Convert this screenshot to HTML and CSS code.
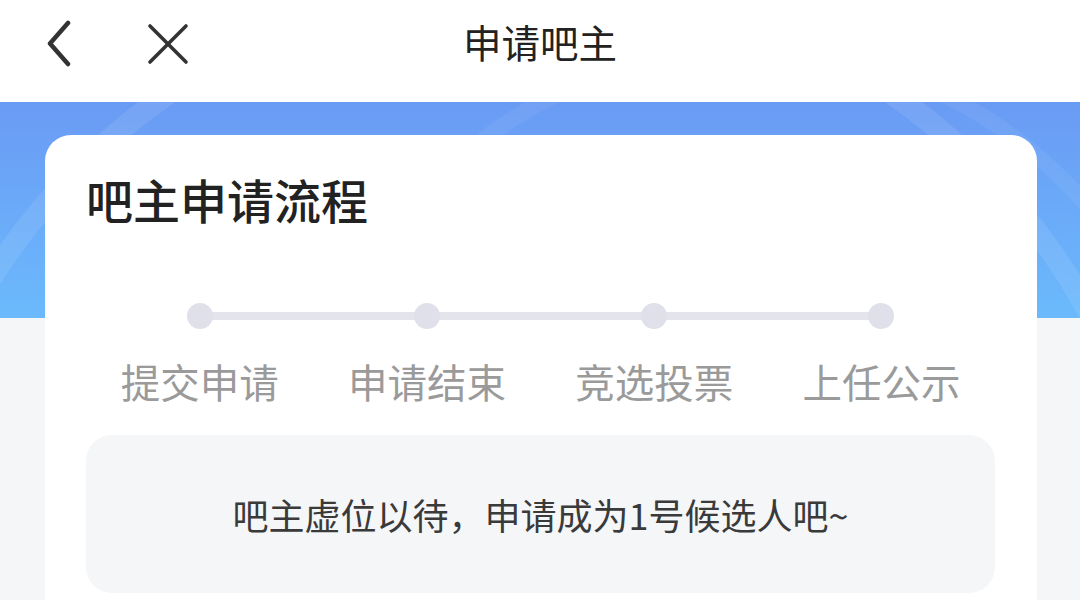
FILE: index.html
```html
<!DOCTYPE html>
<html>
  <head>
    <meta charset="utf-8">
    <title>申请吧主</title>
    <link rel="stylesheet" href="styles.css">
  </head>

  <body>
    <div class="top-bar">
      <div class="nav-left">
        <svg class="nav-icon" viewBox="0 0 48 48" width="48" height="48">
          <polyline points="33,3 15,23.5 33,44" fill="none" stroke="#333" stroke-width="4.5" stroke-linecap="round" stroke-linejoin="round" />
        </svg>
        <svg class="nav-icon close-icon" viewBox="0 0 48 48" width="48" height="48">
          <line x1="6" y1="6" x2="42" y2="42" stroke="#333" stroke-width="3.6" stroke-linecap="round" />
          <line x1="42" y1="6" x2="6" y2="42" stroke="#333" stroke-width="3.6" stroke-linecap="round" />
        </svg>
      </div>
      <div class="page-title">申请吧主</div>
      <div></div>
    </div>

    <div class="page">
      <div class="banner">
        <div class="ring ring-big"></div>
        <div class="ring ring-small"></div>
      </div>

      <div class="card">
        <h2 class="card-title">吧主申请流程</h2>

        <div class="steps">
          <div class="step">
            <div class="dot"></div>
            <div class="step-label">提交申请</div>
          </div>
          <div class="step">
            <div class="dot"></div>
            <div class="step-label">申请结束</div>
          </div>
          <div class="step">
            <div class="dot"></div>
            <div class="step-label">竞选投票</div>
          </div>
          <div class="step">
            <div class="dot"></div>
            <div class="step-label">上任公示</div>
          </div>
        </div>

        <div class="notice">吧主虚位以待，申请成为1号候选人吧~</div>
      </div>
    </div>
  </body>
</html>
```

FILE: styles.css
```css
body {
  margin: 0;
  font-family: "Noto Sans CJK SC", "Noto Sans", sans-serif;
  background: #f5f6f8;
  color: #222;
  overflow: hidden;
}

.top-bar {
  display: grid;
  grid-template-columns: 1fr auto 1fr;
  align-items: center;
  height: 88px;
  padding-bottom: 14px;
  background: #fff;
}

.nav-left {
  display: flex;
  align-items: center;
  padding-left: 35px;
}

.nav-icon {
  display: block;
}

.close-icon {
  margin-left: 61px;
}

.page-title {
  margin-bottom: 6px;
  font-size: 38.5px;
  line-height: 52px;
  color: #222;
}

.page {
  position: relative;
  padding: 33px 43px 0 45px;
}

.banner {
  position: absolute;
  top: 0;
  left: 0;
  right: 0;
  height: 216px;
  overflow: hidden;
  background: linear-gradient(180deg, #6a9bf4 0%, #6bb0fa 70%, #6bbafc 100%);
}

.ring {
  position: absolute;
  border-radius: 50%;
  border-style: solid;
  box-sizing: border-box;
}

.ring-big {
  left: -118px;
  top: -132px;
  width: 1296px;
  height: 1296px;
  border-width: 22px;
  border-color: rgba(255, 255, 255, 0.09);
}

.ring-small {
  left: 300px;
  top: -60px;
  width: 900px;
  height: 900px;
  border-width: 16px;
  border-color: rgba(255, 255, 255, 0.06);
}

.card {
  position: relative;
  background: #fff;
  border-radius: 26px;
  padding: 32px 42px 40px 41px;
}

.card-title {
  margin: 0;
  font-size: 47px;
  line-height: 64px;
  font-weight: 500;
  color: #222;
}

.steps {
  position: relative;
  display: grid;
  grid-template-columns: repeat(4, 1fr);
  margin-top: 72px;
}

.steps::before {
  content: "";
  position: absolute;
  top: 9px;
  left: 12.5%;
  right: 12.5%;
  height: 8px;
  background: #e4e4ec;
}

.step {
  display: flex;
  flex-direction: column;
  align-items: center;
}

.dot {
  position: relative;
  width: 26px;
  height: 26px;
  border-radius: 50%;
  background: #e0e0ea;
}

.step-label {
  margin-top: 26px;
  font-size: 39.5px;
  line-height: 52px;
  color: #9a9a9a;
}

.notice {
  margin-top: 28px;
  height: 158px;
  line-height: 158px;
  text-align: center;
  border-radius: 26px;
  background: #f5f6f8;
  font-size: 36px;
  color: #3a3a3a;
}
```
